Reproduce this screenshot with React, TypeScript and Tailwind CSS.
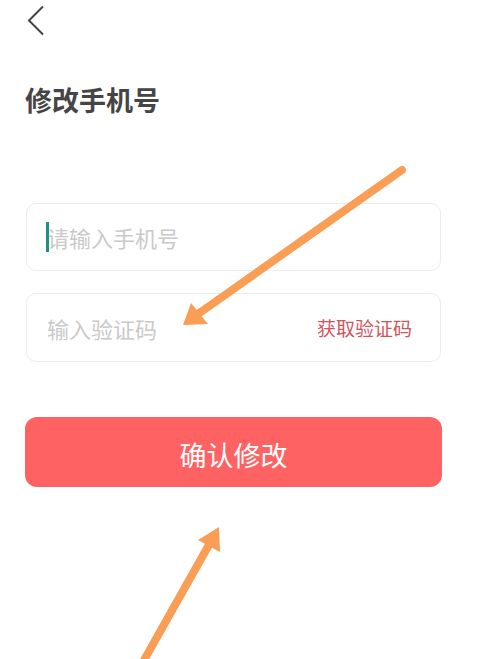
import React from "react";

export default function App() {
  const font = { fontFamily: '"Noto Sans CJK SC", "Noto Sans", sans-serif' };
  return (
    <div className="relative w-[491px] h-[659px] bg-white overflow-hidden" style={font}>
      <div className="h-[40px] pl-[27px] pt-[5px]">
        <svg width="18" height="31" viewBox="0 0 18 31">
          <polyline points="16,1.5 2,15.5 16,29.5" fill="none" stroke="#444" strokeWidth="2" />
        </svg>
      </div>
      <h1 className="mt-[46px] ml-[25px] text-[27px] leading-[27px] font-bold text-[#454545]">修改手机号</h1>
      <div className="ml-[26px] mt-[90px] w-[415px] flex flex-col gap-[22px]">
        <div className="h-[68px] rounded-[10px] border border-[#ececec] flex items-center pl-[19px]">
          <span className="w-[3px] h-[30px] bg-[#23907f] mr-[-2px] relative z-10" />
          <span className="text-[22px] text-[#c9c9c9] leading-none">请输入手机号</span>
        </div>
        <div className="h-[69px] rounded-[10px] border border-[#ececec] flex items-center justify-between pl-[20px] pr-[28px]">
          <span className="text-[22px] text-[#c9c9c9] leading-none">输入验证码</span>
          <span className="text-[19px] text-[#d2535b] leading-none">获取验证码</span>
        </div>
      </div>
      <button className="ml-[25px] mt-[55px] w-[417px] h-[70px] rounded-[12px] bg-[#fe6262] text-white text-[27px] leading-none pt-[4px] flex items-center justify-center">
        确认修改
      </button>
      <svg className="absolute left-0 top-0 pointer-events-none" width="491" height="659" viewBox="0 0 491 659">
        <g stroke="#fa9d55" strokeWidth="8" strokeLinecap="round" fill="#fa9d55">
          <line x1="402" y1="170" x2="198" y2="314" />
          <line x1="143" y1="662" x2="210" y2="543" />
        </g>
        <polygon points="183,325 191,303 208,324" fill="#fa9d55" />
        <polygon points="219,527 198,540 220,552" fill="#fa9d55" />
      </svg>
    </div>
  );
}
